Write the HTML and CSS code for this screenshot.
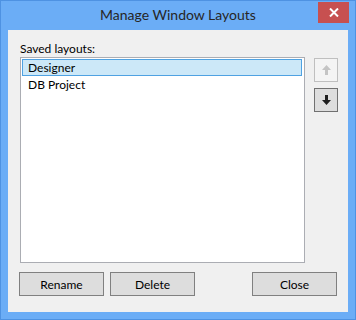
FILE: index.html
```html
<!DOCTYPE html>
<html lang="en">
<head>
    <meta charset="UTF-8">
    <title>Manage Window Layouts</title>
    <link rel="stylesheet" href="styles.css">
</head>
<body>

<div class="window">
    <!-- Title Bar -->
    <div class="titlebar">
        <span class="title">Manage Window Layouts</span>
        <button class="close-x" aria-label="Close">
            <svg width="10" height="9" viewBox="0 0 10 9">
                <path d="M1 0.5l8 8M9 0.5l-8 8" stroke="#fff" stroke-width="2"/>
            </svg>
        </button>
    </div>

    <div class="client">
        <div class="label">Saved layouts:</div>

        <div class="main">
            <ul class="listbox">
                <li class="item selected">Designer</li>
                <li class="item">DB Project</li>
            </ul>

            <div class="side">
                <button class="arrow-btn disabled" aria-label="Move up">
                    <svg width="9" height="10" viewBox="0 0 9 10">
                        <path d="M3 10V5H0l4.5-5 4.5 5H6v5z" fill="currentColor"/>
                    </svg>
                </button>
                <button class="arrow-btn" aria-label="Move down">
                    <svg width="9" height="10" viewBox="0 0 9 10">
                        <path d="M3 0v5H0l4.5 5 4.5-5H6V0z" fill="currentColor"/>
                    </svg>
                </button>
            </div>
        </div>

        <div class="actions">
            <button class="btn">Rename</button>
            <button class="btn">Delete</button>
            <button class="btn btn-close">Close</button>
        </div>
    </div>
</div>

</body>
</html>
```

FILE: styles.css
```css
/* Page */
body {
    margin: 0;
    padding: 0;
    background: #fff;
    font-family: Lato, "Noto Sans", Arial, sans-serif;
}

/* Window Frame */
.window {
    width: 356px;
    height: 320px;
    box-sizing: border-box;
    border: 1px solid #4e92e2;
    background: #6badf6;
    display: flex;
    flex-direction: column;
}

.titlebar {
    height: 29px;
    position: relative;
    display: flex;
    justify-content: center;
    align-items: center;
}

.title {
    font-size: 14px;
    color: #262626;
    margin-top: -2px;
}

.close-x {
    position: absolute;
    top: 1px;
    right: 6px;
    width: 31px;
    height: 21px;
    border: none;
    padding: 0;
    background: #c75050;
    display: flex;
    justify-content: center;
    align-items: center;
}

/* Client Area */
.client {
    flex: 1;
    margin: 0 7px 7px 7px;
    background: #f0f0f0;
    padding: 11px 10px 0 12px;
    font-size: 12px;
    color: #000;
}

.label {
    height: 16px;
    line-height: 16px;
}

.main {
    display: flex;
    gap: 9px;
}

/* List */
.listbox {
    list-style: none;
    margin: 0;
    padding: 1px 2px 1px 1px;
    width: 285px;
    height: 206px;
    box-sizing: border-box;
    border: 1px solid #abadb3;
    background: #fff;
}

.item {
    height: 17px;
    line-height: 15px;
    padding-left: 5px;
    box-sizing: border-box;
    border: 1px solid transparent;
}

.item.selected {
    background: #cce8f8;
    border-color: #4fa2e2;
}

.side {
    display: flex;
    flex-direction: column;
    gap: 6px;
    padding-top: 1px;
}

.arrow-btn {
    width: 24px;
    height: 24px;
    padding: 0;
    border: 1px solid #707070;
    background: #dddddd;
    color: #1e1e1e;
    display: flex;
    justify-content: center;
    align-items: center;
}

.arrow-btn.disabled {
    border-color: #bfbfbf;
    background: #f4f4f4;
    color: #c4c4c4;
}

/* Bottom Buttons */
.actions {
    display: flex;
    gap: 6px;
    margin: 9px 1px 0 -1px;
}

.btn {
    width: 85px;
    height: 24px;
    padding: 0;
    border: 1px solid #808080;
    background: #dddddd;
    font-family: inherit;
    font-size: 12px;
    color: #000;
}

.btn-close {
    margin-left: auto;
}
```
